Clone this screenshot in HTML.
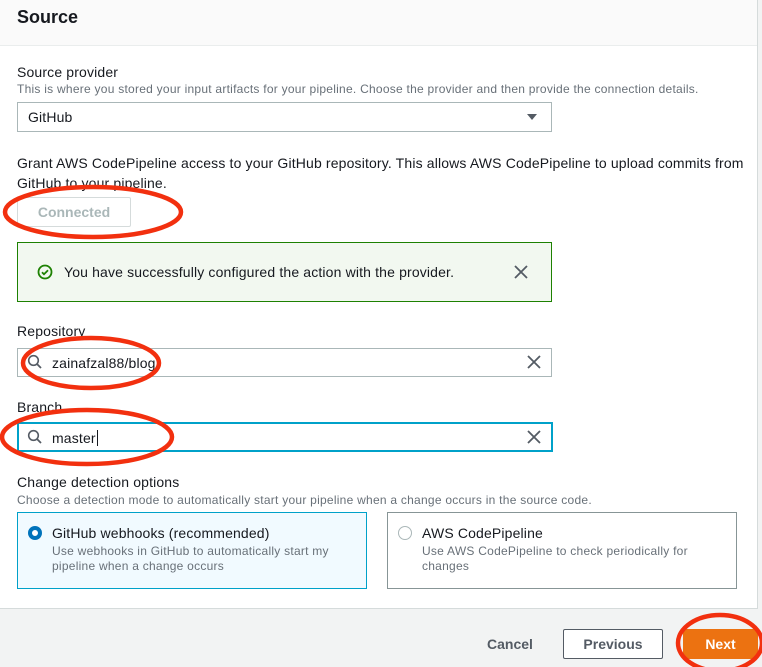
<!DOCTYPE html>
<html><head><style>
*{box-sizing:border-box;margin:0;padding:0}
body{width:762px;height:667px;background:#f2f3f3;font-family:"Liberation Sans",Arial,sans-serif;color:#16191f;position:relative;overflow:hidden}
.abs{position:absolute}
.panel{left:0;top:0;width:758px;height:609px;background:#fff;border-right:1px solid #d5dbdb;border-bottom:1px solid #d5dbdb}
.hdr{left:0;top:0;width:757px;height:46px;background:#fafafa;border-bottom:1px solid #eaeded}
.lbl{font-size:14px;letter-spacing:0.15px}
.desc{font-size:12px;color:#687078;letter-spacing:0.25px}
.inp{border:1px solid #aab7b8;background:#fff}
</style></head><body>
<div class="abs panel"></div>
<div class="abs hdr"></div>
<div class="abs" style="left:17px;top:7px;font-size:18px;font-weight:bold">Source</div>
<div class="abs lbl" style="left:17px;top:64px">Source provider</div>
<div class="abs desc" style="left:17px;top:82px">This is where you stored your input artifacts for your pipeline. Choose the provider and then provide the connection details.</div>
<div class="abs inp" style="left:17px;top:102px;width:535px;height:30px"></div>
<div class="abs lbl" style="left:28px;top:109px">GitHub</div>
<svg class="abs" style="left:526px;top:112px" width="12" height="10"><path d="M1 2h10L6 8z" fill="#545b64"/></svg>
<div class="abs lbl" style="left:17px;top:153px;width:740px;line-height:20px">Grant AWS CodePipeline access to your GitHub repository. This allows AWS CodePipeline to upload commits from GitHub to your pipeline.</div>
<div class="abs" style="left:17px;top:197px;width:114px;height:30px;border:1px solid #d5dbdb;border-radius:2px;color:#aab7b8;font-weight:bold;font-size:14px;text-align:center;line-height:28px">Connected</div>
<div class="abs" style="left:17px;top:242px;width:535px;height:60px;border:1px solid #1d8102;background:#f2f8f0"></div>
<svg class="abs" style="left:37px;top:264px" width="16" height="16"><circle cx="8" cy="8" r="6.5" fill="none" stroke="#1d8102" stroke-width="1.8"/><path d="M5 8.2l2 2 4-4" fill="none" stroke="#1d8102" stroke-width="1.8"/></svg>
<div class="abs lbl" style="left:64px;top:264px">You have successfully configured the action with the provider.</div>
<svg class="abs" style="left:514px;top:265px" width="14" height="14"><path d="M1 1l12 12M13 1L1 13" stroke="#545b64" stroke-width="1.8"/></svg>
<div class="abs lbl" style="left:17px;top:323px">Repository</div>
<div class="abs inp" style="left:17px;top:348px;width:535px;height:29px"></div>
<svg class="abs" style="left:27px;top:354px" width="16" height="16"><circle cx="6.5" cy="6.5" r="4.8" fill="none" stroke="#545b64" stroke-width="1.6"/><path d="M10 10l4 4" stroke="#545b64" stroke-width="1.8"/></svg>
<div class="abs lbl" style="left:52px;top:355px">zainafzal88/blog</div>
<svg class="abs" style="left:527px;top:355px" width="14" height="14"><path d="M1 1l12 12M13 1L1 13" stroke="#545b64" stroke-width="1.8"/></svg>
<div class="abs lbl" style="left:17px;top:399px">Branch</div>
<div class="abs" style="left:17px;top:422px;width:536px;height:30px;border:2px solid #00a1c9"></div>
<svg class="abs" style="left:27px;top:429px" width="16" height="16"><circle cx="6.5" cy="6.5" r="4.8" fill="none" stroke="#545b64" stroke-width="1.6"/><path d="M10 10l4 4" stroke="#545b64" stroke-width="1.8"/></svg>
<div class="abs lbl" style="left:52px;top:430px">master<span style="border-left:1px solid #16191f;margin-left:1px"></span></div>
<svg class="abs" style="left:527px;top:430px" width="14" height="14"><path d="M1 1l12 12M13 1L1 13" stroke="#545b64" stroke-width="1.8"/></svg>
<div class="abs lbl" style="left:17px;top:474px">Change detection options</div>
<div class="abs desc" style="left:17px;top:493px">Choose a detection mode to automatically start your pipeline when a change occurs in the source code.</div>
<div class="abs" style="left:17px;top:512px;width:350px;height:77px;border:1px solid #00a1c9;background:#f1faff"></div>
<div class="abs" style="left:28px;top:526px;width:14px;height:14px;border-radius:50%;border:4px solid #0073bb;background:#fff"></div>
<div class="abs lbl" style="left:52px;top:525px">GitHub webhooks (recommended)</div>
<div class="abs desc" style="left:52px;top:544px;line-height:15px;width:300px">Use webhooks in GitHub to automatically start my pipeline when a change occurs</div>
<div class="abs" style="left:387px;top:512px;width:350px;height:77px;border:1px solid #879596"></div>
<div class="abs" style="left:398px;top:526px;width:14px;height:14px;border-radius:50%;border:1px solid #aab7b8;background:#fff"></div>
<div class="abs lbl" style="left:422px;top:525px">AWS CodePipeline</div>
<div class="abs desc" style="left:422px;top:544px;line-height:15px;width:300px">Use AWS CodePipeline to check periodically for changes</div>
<div class="abs" style="left:487px;top:636px;font-size:14px;font-weight:bold;color:#545b64">Cancel</div>
<div class="abs" style="left:563px;top:629px;width:100px;height:30px;border:1px solid #545b64;background:#fff;font-size:14px;font-weight:bold;color:#545b64;text-align:center;line-height:28px;border-radius:2px">Previous</div>
<div class="abs" style="left:683px;top:629px;width:75px;height:30px;background:#ec7211;font-size:14px;font-weight:bold;color:#fff;text-align:center;line-height:30px;border-radius:2px">Next</div>
<svg class="abs" style="left:0;top:0" width="762" height="667">
<g fill="none" stroke="#f2300f" stroke-width="4.5">
<ellipse cx="93" cy="212" rx="88" ry="25"/>
<ellipse cx="91" cy="363" rx="68" ry="25"/>
<ellipse cx="87" cy="437" rx="85" ry="27"/>
<ellipse cx="720" cy="643" rx="42" ry="28"/>
</g></svg>
</body></html>
